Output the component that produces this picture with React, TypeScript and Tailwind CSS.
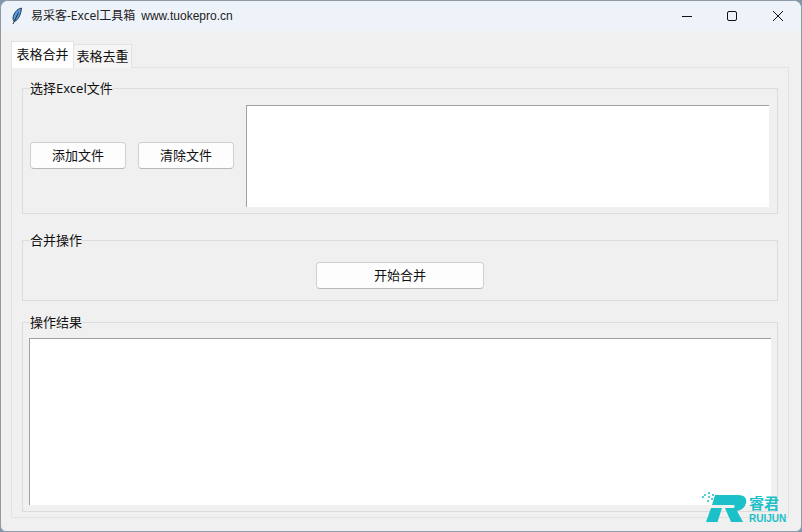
const FONT = "font-['Noto_Sans','Noto_Sans_CJK_SC',sans-serif]";

function Group({ label, className, children }: { label: string; className: string; children: React.ReactNode }) {
  return (
    <div className={`relative border border-[#dcdcdc] ${className}`}>
      <span className="absolute left-[7px] top-[-10px] bg-[#f0f0f0] leading-[18px] text-[13px] text-[#111]">{label}</span>
      {children}
    </div>
  );
}

function Btn({ label, className }: { label: string; className: string }) {
  return (
    <button className={`rounded-[4px] border border-[#d0d0d0] border-b-[#b8b8b8] bg-[#fdfdfd] text-[13px] leading-none text-[#111] ${className}`}>
      {label}
    </button>
  );
}

function Logo() {
  return (
    <div className="absolute left-[701px] top-[491px] h-[32px] w-[90px]">
      <svg width="46" height="32" viewBox="0 0 46 32" className="absolute left-0 top-0">
        <g fill="#1cc0c9" opacity="0.75">
          <rect x="2" y="2" width="2" height="2" />
          <rect x="6" y="0" width="2" height="2" />
          <rect x="10" y="2" width="2" height="2" />
          <rect x="6" y="4" width="2" height="2" />
          <rect x="0" y="4" width="2" height="2" />
          <rect x="9" y="6" width="2" height="2" />
          <rect x="5" y="8" width="2" height="2" />
        </g>
        <path fill="#1cc0c9" d="M13 3H36C43 3 45 7 44 11C43 15.500 40 18 35 19L41 30H29L23 16H31C33 16 33.500 13 31 13H10L13 3Z" />
        <path fill="#1cc0c9" d="M9 16H20L15.500 30H4L9 16Z" />
      </svg>
      <span className="absolute left-[47px] top-[3px] text-[15px] font-bold leading-[17px] text-[#1cc0c9]">睿君</span>
      <span className="absolute left-[47px] top-[21px] font-['Liberation_Sans',sans-serif] text-[10px] font-bold leading-[11px] text-[#1cc0c9]">RUIJUN</span>
    </div>
  );
}

export default function App() {
  return (
    <div className={`${FONT} h-[532px] w-[802px] bg-[#8098ad]`}>
      <div className="relative flex h-[532px] flex-col overflow-hidden rounded-t-[8px] rounded-b-[6px] border border-[#8f9aa5] bg-[#f0f0f0]">
        <div className="flex h-[30px] shrink-0 items-center bg-[#eef3fa]">
          <svg width="14" height="18" viewBox="0 0 14 18" className="ml-[9px] mr-[7px]">
            <path d="M11.500 1C7 2 3.500 6 3 11C3 13 3.500 14 4.500 14.500C8 13 11 8 11.500 1Z" fill="#5a9be0" stroke="#10202e" strokeWidth="0.8" />
            <path d="M8.500 5.500L3 17" stroke="#10202e" strokeWidth="0.9" />
          </svg>
          <span className="text-[12px] text-[#222]">易采客-Excel工具箱</span>
          <span className="ml-[6px] font-['Liberation_Sans',sans-serif] text-[12px] text-[#222]">www.tuokepro.cn</span>
          <div className="ml-auto flex items-center">
            <svg width="12" height="12" viewBox="0 0 12 12" className="mr-[33px]"><path d="M1 6.500H11" stroke="#111" strokeWidth="1" /></svg>
            <svg width="12" height="12" viewBox="0 0 12 12" className="mr-[34px]"><rect x="1.500" y="1.500" width="9" height="9" rx="1.500" fill="none" stroke="#111" strokeWidth="1" /></svg>
            <svg width="12" height="12" viewBox="0 0 12 12" className="mr-[17px]"><path d="M1 1L11 11M11 1L1 11" stroke="#111" strokeWidth="1" /></svg>
          </div>
        </div>

        <div className="flex flex-1 flex-col pl-[10px] pr-[12px] pb-[13px] pt-[10px]">
          <div className="relative z-10 mb-[-1px] flex h-[27px] items-end">
            <div className="flex h-[27px] w-[63px] items-center justify-center border border-[#e2e2e2] border-b-0 bg-white text-[13px] text-[#111]">表格合并</div>
            <div className="flex h-[24px] w-[58px] items-center justify-center border border-l-0 border-[#e2e2e2] border-b-0 bg-[#f5f5f5] text-[13px] text-[#111]">表格去重</div>
          </div>
          <div className="flex flex-1 flex-col border border-[#e2e2e2] pl-[10px] pr-[10px] pt-[20px] pb-[5px]">
            <Group label="选择Excel文件" className="flex h-[126px] items-center pl-[7px] pr-[8px] pt-[16px] pb-[6px]">
              <Btn label="添加文件" className="mb-[1px] h-[27px] w-[96px]" />
              <Btn label="清除文件" className="mb-[1px] ml-[12px] h-[27px] w-[96px]" />
              <div className="ml-[12px] h-[102px] flex-1 border-l border-t border-[#a0a0a0] bg-white" />
            </Group>
            <Group label="合并操作" className="mt-[26px] flex h-[61px] items-center justify-center pt-[10px]">
              <Btn label="开始合并" className="h-[27px] w-[168px]" />
            </Group>
            <Group label="操作结果" className="mt-[21px] flex-1 pl-[6px] pr-[6px] pt-[15px] pb-[6px]">
              <div className="h-full border-l border-t border-[#a0a0a0] bg-white" />
            </Group>
          </div>
        </div>
        <Logo />
      </div>
    </div>
  );
}
